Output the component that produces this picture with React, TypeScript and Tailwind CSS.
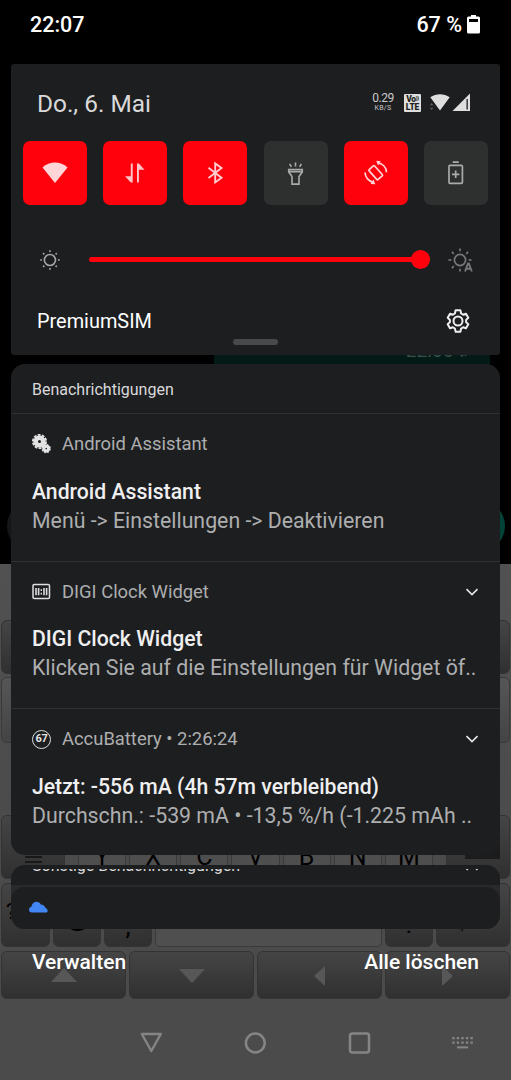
import type { ReactNode } from "react";

const KEY = "rounded-[6px] border border-[#333333] bg-linear-to-b from-[#454545] to-[#303030]";
const LIGHT_KEY = "rounded-[5px] border border-[#3a3a3a] bg-linear-to-b from-[#4a4a4a] to-[#505050]";

function ArrowKey({ d }: { d: string }) {
  return (
    <div className={`flex flex-1 items-center justify-center ${KEY}`}>
      <svg className="mt-[2px] size-[28px]" viewBox="0 0 28 28" fill="#575757">
        <path d={d} />
      </svg>
    </div>
  );
}

function Wallpaper() {
  return (
    <div className="absolute inset-0 flex flex-col bg-black">
      <div className="relative h-[564px] shrink-0">
        <div className="absolute top-[330px] left-[214px] h-[50px] w-[276px] rounded-[10px] bg-[#031a16]" />
        <div className="absolute top-[342px] left-[406px] text-[19px] leading-[18px] whitespace-nowrap text-[#36504b]">22:06</div>
        <svg className="absolute top-[346px] left-[458px] h-[12px] w-[16px]" viewBox="0 0 16 12" fill="none" stroke="#36504b" strokeWidth="1.500">
          <path d="m1 7 3 3 6-8M7 10l6-8" />
        </svg>
        <div className="absolute top-[500px] left-[7px] size-[52px] rounded-full bg-[#151617]" />
        <div className="absolute top-[500px] left-[453px] size-[52px] rounded-full bg-[#044238]" />
      </div>
      <div className="flex flex-1 flex-col bg-linear-to-b from-[#515151] via-[#4b4b4b] to-[#4b4b4b] pt-[56px]">
        <div className="flex h-[54px] justify-between px-[1px]">
          <div className={`w-[48px] ${KEY}`} />
          <div className={`w-[48px] ${KEY}`} />
        </div>
        <div className="mt-[3px] flex h-[66px] justify-between px-[1px]">
          <div className="w-[48px] rounded-[6px] border border-[#3a3a3a] bg-linear-to-b from-[#565656] to-[#444444]" />
          <div className="w-[48px] rounded-[6px] border border-[#3a3a3a] bg-linear-to-b from-[#565656] to-[#444444]" />
        </div>
        <div className="mt-[72px] flex h-[64px] px-[1px]">
          <div className={`w-[64px] pt-[35px] pl-[23px] ${KEY}`}>
            <div className="flex w-[17px] flex-col gap-[3px]">
              <div className="h-[2px] bg-[#191919]" />
              <div className="h-[2px] bg-[#191919]" />
              <div className="h-[2px] bg-[#191919]" />
            </div>
          </div>
          <div className="flex flex-1 gap-[3px] px-[13px]">
            {["Y", "X", "C", "V", "B", "N", "M"].map((k) => (
              <div key={k} className={`flex flex-1 justify-center pt-[26px] text-[25px] leading-[30px] text-black ${LIGHT_KEY}`}>
                {k}
              </div>
            ))}
          </div>
          <div className={`flex w-[64px] justify-end pt-[28px] pr-[9px] ${KEY}`}>
            <div className="h-[15px] w-[35px] bg-[#1c1c1c]" />
          </div>
        </div>
        <div className="mt-[4px] flex h-[64px] gap-[3px] px-[1px] text-black">
          <div className={`w-[49px] pt-[14px] pl-[4px] text-[22px] leading-[28px] ${KEY}`}>?1</div>
          <div className={`flex w-[48px] justify-center pt-[20px] ${KEY}`}>
            <div className="size-[27px] rounded-full border-2 border-black" />
          </div>
          <div className={`flex w-[48px] justify-center pt-[27px] text-[26px] leading-[30px] ${KEY}`}>,</div>
          <div className={`flex-1 ${LIGHT_KEY}`} />
          <div className={`flex w-[48px] justify-center pt-[27px] text-[24px] leading-[28px] ${KEY}`}>.</div>
          <div className={`w-[74px] pt-[30px] pl-[18px] ${KEY}`}>
            <svg className="h-[18px] w-[42px]" viewBox="0 0 42 18">
              <path d="M0 10 8 2v6h32v4H8v6z" fill="#161616" />
            </svg>
          </div>
        </div>
        <div className="mt-[4px] flex h-[48px] gap-[3px] px-[1px]">
          <ArrowKey d="M1 20 14 6l13 14z" />
          <ArrowKey d="M1 7h26L14 21z" />
          <ArrowKey d="M19 4v20L8 14z" />
          <ArrowKey d="M8 4v20l11-10z" />
        </div>
      </div>
    </div>
  );
}

function Tile({ active = false, children }: { active?: boolean; children: ReactNode }) {
  return (
    <div className={`flex size-[64px] items-center justify-center rounded-[7px] ${active ? "bg-[#ff000d]" : "bg-[#2e302f]"}`}>
      {children}
    </div>
  );
}

function QuickTiles() {
  return (
    <div className="mt-[20px] flex justify-between px-[12px]">
      <Tile active>
        <svg className="size-[28px]" viewBox="0 0 28 28" fill="#ffd5d7">
          <path d="M1.500 8.400C8.500 1.900 19.500 1.900 26.500 8.400L14 24z" />
        </svg>
      </Tile>
      <Tile active>
        <svg className="size-[28px]" viewBox="0 0 28 28" fill="#ffc4c8">
          <path d="M9.800 4.500h1.900v19H9.800L4 17.200h5.800zM16 4.500h1.900l5.600 6.300h-5.600v12.700H16z" />
        </svg>
      </Tile>
      <Tile active>
        <svg className="size-[28px]" viewBox="0 0 28 28" fill="none" stroke="#ffcdd0" strokeWidth="1.900">
          <path d="m7.500 8.800 13 10-6.300 4.600V4.400l6.300 4.600L7.500 19" />
        </svg>
      </Tile>
      <Tile>
        <svg className="size-[28px]" viewBox="0 0 28 28" fill="none" stroke="#a9aaaa" strokeWidth="1.600">
          <path d="M6.700 10.500h13.600v2.500l-3.300 4.500v7.600h-7v-7.600l-3.300-4.500zM6.700 12.600h13.600M13.500 3.500v4M7.700 4.800l1.600 3M19.300 4.800l-1.600 3" />
        </svg>
      </Tile>
      <Tile active>
        <svg className="size-[28px]" viewBox="0 0 28 28" fill="none" stroke="#ffd5d7" strokeWidth="1.700">
          <rect x="10" y="7" width="7.400" height="13.400" rx="1" transform="rotate(-42 13.700 13.700)" />
          <path d="M3 13.500c.3 4.800 3.600 9 8.500 9.800M24.500 13.200c-.3-4.800-3.600-8.500-8.500-9.300" />
          <path d="m8.500 25 3-4.500 1.800 4.800zM18.800 2.200l-2.800 4.300-1.800-4.800z" fill="#ffd5d7" stroke="none" />
        </svg>
      </Tile>
      <Tile>
        <svg className="size-[28px]" viewBox="0 0 28 28" fill="none" stroke="#a9aaaa" strokeWidth="1.700">
          <rect x="7" y="6.300" width="13.400" height="18" rx="1" />
          <path d="M10.700 3.200h6M13.700 11.500V19M10 15.300h7.400" />
        </svg>
      </Tile>
    </div>
  );
}

function StatusIcons() {
  return (
    <div className="flex items-center">
      <div className="flex w-[22px] flex-col items-center text-[#c9c9ca]">
        <span className="text-[12px] leading-[11px] tracking-[-0.500px]">0.29</span>
        <span className="text-[7px] leading-[8px] tracking-[0.300px]">KB/S</span>
      </div>
      <div className="ml-[10px] flex h-[18px] w-[17px] flex-col items-center rounded-[1px] bg-[#dededf] pt-[1px] font-black text-[#1d1e20]">
        <span className="flex text-[8.500px] leading-[8px] tracking-[-0.300px]">
          Vo<span className="text-[5px] leading-[6px] tracking-[-0.300px]">))</span>
        </span>
        <span className="text-[8.500px] leading-[8px] tracking-[-0.200px]">LTE</span>
      </div>
      <svg className="ml-[8px] h-[19px] w-[42px]" viewBox="0 0 42 19" fill="#dededf">
        <path d="M1.300 4.200C7 .2 15 .2 20.700 4.200L11 17.500zM41 .5v17.500H23.500z" />
        <path d="M37.500 6h1.300v10.500h-1.300z" fill="#1d1e20" />
        <path d="m.7 12.200 1.900-2.200 1.900 2.200zM.7 14.800 2.600 17l1.900-2.200z" fill="#5b5c5d" />
      </svg>
    </div>
  );
}

function Sun({ auto = false }: { auto?: boolean }) {
  const rays = [0, 45, 90, 135, 180, 225, 270, 315];
  return (
    <svg className={auto ? "h-[28px] w-[28px]" : "size-[24px] translate-y-[1px]"} viewBox={auto ? "0 0 28 28" : "-2 -2 28 28"} fill="none" stroke={auto ? "#77787a" : "#a4a5a6"} strokeWidth={auto ? 1.700 : 1.900}>
      <circle cx="12" cy="12" r={auto ? 5.600 : 6.500} />
      {rays
        .filter((a) => !auto || a !== 135)
        .map((a) => (
          <path key={a} d={auto ? "M12 .5v2.800" : "M12 .6v2"} transform={`rotate(${a} 12 12)`} />
        ))}
      {auto && <path d="m17 23.500 3-8h.800l3 8M18 20.800h5" strokeWidth="1.900" />}
    </svg>
  );
}

function Chevron() {
  return (
    <svg className="h-[8px] w-[14px]" viewBox="0 0 14 8" fill="none" stroke="#e4e4e5" strokeWidth="1.700">
      <path d="m1.500 1.200 5.500 5.300 5.500-5.300" />
    </svg>
  );
}

function GearsIcon() {
  return (
    <svg className="size-[20px]" viewBox="0 0 20 20" fill="none" stroke="#e3e3e4">
      <circle cx="7.500" cy="7.500" r="3.800" strokeWidth="4.600" />
      <circle cx="7.500" cy="7.500" r="6.600" strokeWidth="1.900" strokeDasharray="2.900 1.250" />
      <circle cx="14.200" cy="14.600" r="2.300" strokeWidth="3" />
      <circle cx="14.200" cy="14.600" r="3.900" strokeWidth="1.400" strokeDasharray="2 1.060" />
    </svg>
  );
}

function ClockIcon() {
  return (
    <svg className="h-[18px] w-[20px]" viewBox="0 0 20 18" fill="none" stroke="#dededf">
      <rect x="1" y="1.500" width="16.500" height="14" rx="1.300" strokeWidth="1.500" />
      <path d="M4 5v7.200M6.600 5v7.200M12 5v7.200M14.600 5v7.200" strokeWidth="1.600" />
      <path d="M9.300 6.300v1.600M9.300 9.800v1.600" strokeWidth="1.400" />
    </svg>
  );
}

function BatteryIcon() {
  return (
    <div className="flex size-[19px] items-center justify-center rounded-full border-[1.500px] border-[#dededf] text-[11px] font-bold tracking-[-0.300px] text-[#e3e3e4]">
      67
    </div>
  );
}

function Notification({ icon, app, title, text, expandable, last }: {
  icon: ReactNode; app: string; title: string; text: string; expandable?: boolean; last?: boolean;
}) {
  return (
    <section className={`border-t border-[#303133] pr-[21px] pl-[21px] ${last ? "h-[147px]" : "h-[147.500px]"}`}>
      <div className="flex h-[24px] translate-y-[18px] items-center">
        <div className="w-[30px] shrink-0">{icon}</div>
        <span className="flex-1 text-[18.400px] whitespace-nowrap text-[#adaeaf]">{app}</span>
        {expandable && <Chevron />}
      </div>
      <div className="mt-[38.500px] text-[21.200px] leading-[29px] font-medium whitespace-nowrap text-[#efeff0]">{title}</div>
      <div className="text-[21.300px] leading-[29px] whitespace-nowrap text-[#adaeaf]">{text}</div>
    </section>
  );
}

export default function App() {
  return (
    <div className="relative h-[1080px] w-full overflow-hidden bg-black font-['Roboto',sans-serif]">
      <Wallpaper />
      <div className="relative flex h-full flex-col">
        <header className="flex h-[64px] shrink-0 items-start justify-between bg-black pt-[12px] pr-[31px] pl-[30px] text-[21.500px] leading-[25px] font-medium text-white">
          <span>22:07</span>
          <div className="flex items-start">
            <span>67 %</span>
            <svg className="mt-[3px] ml-[5px] h-[19px] w-[13px]" viewBox="0 0 13 19">
              <path d="M4 0h5v1.500h2.500q1.500 0 1.500 1.500v14q0 1.500-1.500 1.500h-10Q0 18.500 0 17V3q0-1.500 1.500-1.500H4z" fill="#fff" />
              <path d="M2 4h9v3H2z" fill="#000" />
            </svg>
          </div>
        </header>

        <div className="mx-[11px] h-[291px] shrink-0 rounded-[3px] bg-[#1d1e20]">
          <div className="flex items-center justify-between pt-[23px] pr-[29px] pl-[26px]">
            <span className="text-[24.400px] leading-[34px] text-[#d9d9da]">Do., 6. Mai</span>
            <div className="-mt-[3px]">
              <StatusIcons />
            </div>
          </div>
          <QuickTiles />
          <div className="mt-[40px] flex h-[28px] items-center pr-[24px] pl-[27px]">
            <Sun />
            <div className="ml-[27px] h-[5px] w-[332px] rounded-full bg-[#ff000d]" />
            <div className="-ml-[8px] size-[19px] rounded-full bg-[#ff000d]" />
            <div className="mt-[5px] ml-[18px]">
              <Sun auto />
            </div>
          </div>
          <div className="mt-[34px] flex h-[28px] items-center justify-between pr-[31px] pl-[26px]">
            <span className="translate-y-[1px] text-[19.900px] text-white">PremiumSIM</span>
            <svg className="size-[24px] translate-x-[1px]" viewBox="0 0 24 24" fill="none" stroke="#eeeeef" strokeWidth="2" strokeLinejoin="round">
              <path d="M9.600 1.200h4.800l.7 3.300 2 1.200 2.900-1 2.300 4-2.200 2.200v2.200l2.200 2.200-2.300 4-2.900-1-2 1.200-.7 3.300H9.600l-.7-3.300-2-1.200-2.900 1-2.300-4 2.200-2.200v-2.200L1.700 8.700l2.300-4 2.900 1 2-1.200z" />
              <circle cx="12" cy="12" r="4.500" />
            </svg>
          </div>
          <div className="mx-auto mt-[4px] h-[6px] w-[45px] rounded-full bg-[#48494a]" />
        </div>

        <main className="mx-[11px] mt-[9px] h-[491px] shrink-0 overflow-hidden rounded-[14px] bg-[#1d1e20]">
          <h2 className="h-[49px] pt-[14px] pl-[21px] text-[16px] leading-[24px] text-[#d9d9da]">Benachrichtigungen</h2>
          <Notification icon={<GearsIcon />} app="Android Assistant" title="Android Assistant" text="Menü -> Einstellungen -> Deaktivieren" />
          <Notification icon={<ClockIcon />} app="DIGI Clock Widget" title="DIGI Clock Widget" text="Klicken Sie auf die Einstellungen für Widget öf.." expandable />
          <Notification icon={<BatteryIcon />} app="AccuBattery • 2:26:24" title="Jetzt: -556 mA (4h 57m verbleibend)" text="Durchschn.: -539 mA • -13,5 %/h (-1.225 mAh .." expandable last />
        </main>

        <div className="mx-[11px] mt-[10px] h-[64px] shrink-0 overflow-hidden rounded-[14px] bg-[#1d1e20]">
          <div className="h-[20px] pt-[4px]">
            <div className="flex h-[16px] items-start justify-between overflow-hidden pr-[21px] pl-[21px]">
              <span className="-mt-[15px] text-[16px] leading-[24px] whitespace-nowrap text-[#d9d9da]">Sonstige Benachrichtigungen</span>
              <svg className="-mt-[6px] h-[8px] w-[14px]" viewBox="0 0 14 8" fill="none" stroke="#d9d9da" strokeWidth="1.700">
                <path d="m1.500 6.800 5.500-5.300 5.500 5.300" />
              </svg>
            </div>
          </div>
          <div className="bg-[#28292a] pt-[2px]">
            <div className="h-[42px] rounded-[14px] bg-[#1d1e20] pt-[14px] pl-[18px]">
              <svg className="h-[12px] w-[19px]" viewBox="0 0 19 12" fill="#4285f4">
                <path d="M2.800 11.500C1 11.500 0 10.300 0 8.700 0 6.900 1.200 5.900 2.500 5.400 3.300 2.300 5 .8 7.400.8c2 0 3.600 1 4.400 2.700 2.200.1 3.600 1 4.400 3C17.700 7.500 19 9 18.600 10.300c-.2.800-.8 1.200-1.800 1.200z" />
              </svg>
            </div>
          </div>
        </div>

        <div className="mt-[18px] flex justify-between pr-[32px] pl-[32px] text-[21px] leading-[30px] font-medium text-white">
          <span>Verwalten</span>
          <span>Alle löschen</span>
        </div>

        <nav className="mt-[53px] flex h-[26px] items-center pl-[139px]">
          <svg className="size-[24px]" viewBox="0 0 24 24" fill="none" stroke="#858585" strokeWidth="2.400" strokeLinejoin="round">
            <path d="M2.800 3h19L12.300 20z" />
          </svg>
          <svg className="ml-[80px] size-[24px]" viewBox="0 0 24 24" fill="none" stroke="#858585" strokeWidth="2.500">
            <circle cx="12.300" cy="12" r="9.400" />
          </svg>
          <svg className="ml-[80px] size-[24px]" viewBox="0 0 24 24" fill="none" stroke="#858585" strokeWidth="2.500">
            <rect x="3" y="2.500" width="19" height="19" rx="2.200" />
          </svg>
          <svg className="ml-[81px] h-[14px] w-[22px]" viewBox="0 0 22 14" stroke="#858585">
            <path d="M.2 2.200h21M.2 6.600h21" strokeWidth="2.200" strokeDasharray="2.400 2.150" />
            <path d="M5 11.400h11" strokeWidth="2" />
          </svg>
        </nav>
      </div>
    </div>
  );
}
